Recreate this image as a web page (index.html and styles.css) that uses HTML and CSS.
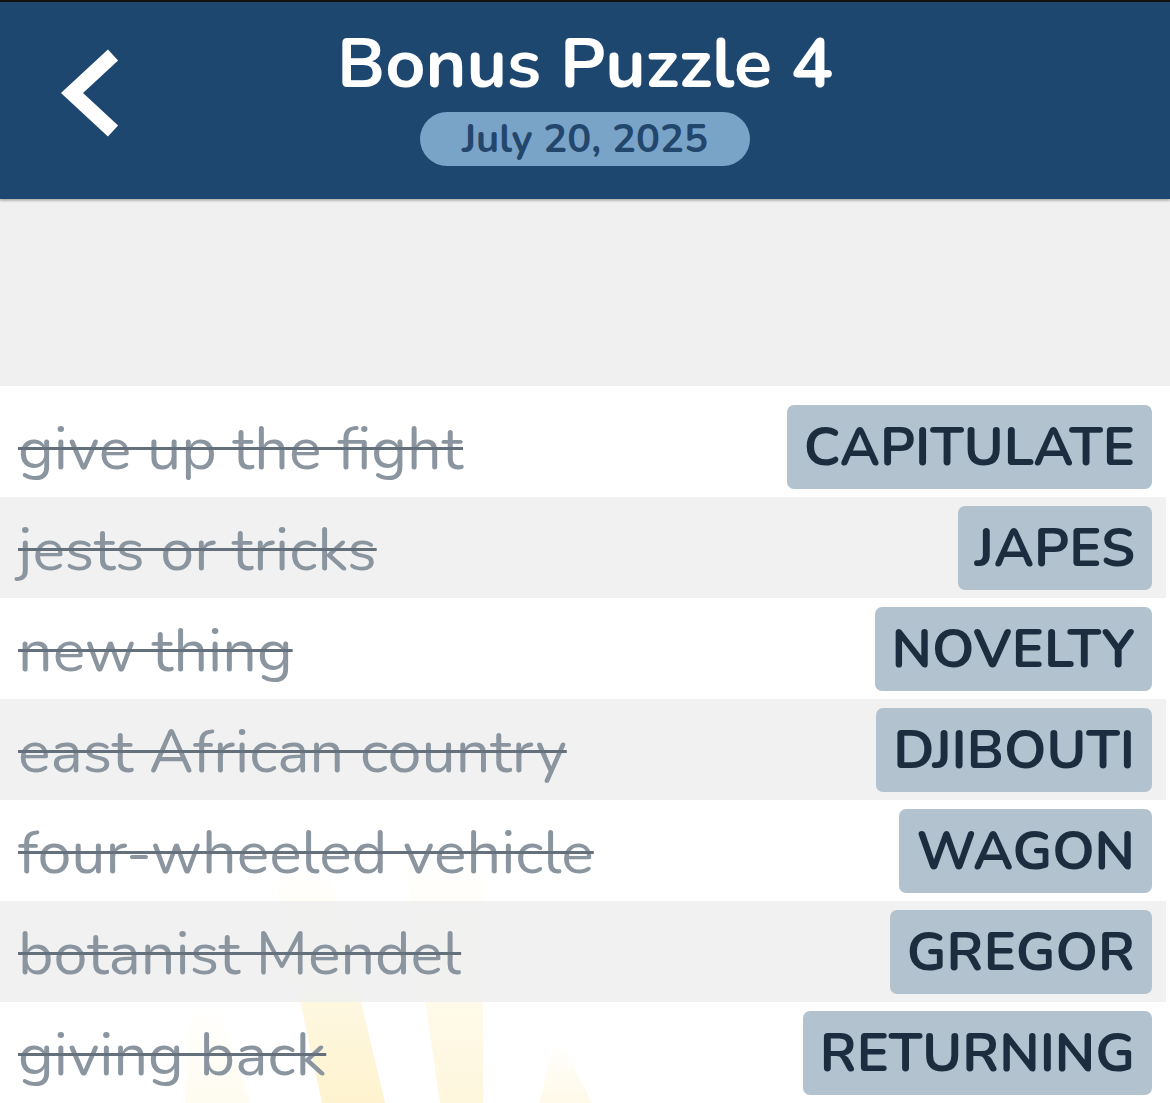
FILE: index.html
```html
<!DOCTYPE html>
<html lang="en">
<head>
<meta charset="utf-8">
<title>Bonus Puzzle 4</title>
<link rel="stylesheet" href="styles.css">
</head>
<body>
<div class="topline"></div>
<header class="header">
  <div class="back">
    <svg width="70" height="98" viewBox="0 0 70 98" aria-hidden="true">
      <polyline points="57,9 16,47 57,85" fill="none" stroke="#ffffff" stroke-width="15" stroke-linejoin="miter" stroke-linecap="butt"/>
    </svg>
  </div>
  <div class="titles">
    <h1 class="title">Bonus Puzzle 4</h1>
    <div class="date">July 20, 2025</div>
  </div>
  <div></div>
</header>
<div class="spacer"></div>
<main class="list">
  <svg class="rays" width="1170" height="717" viewBox="0 386 1170 717" aria-hidden="true">
    <defs>
      <linearGradient id="fade" x1="0" y1="0" x2="0" y2="1">
        <stop offset="0" stop-color="#fde9a6" stop-opacity="0"/>
        <stop offset="0.5" stop-color="#fde9a6" stop-opacity="0.3"/>
        <stop offset="1" stop-color="#fde9a6" stop-opacity="0.55"/>
      </linearGradient>
    </defs>
    <polygon points="272,870 330,870 385,1103 322,1103" fill="url(#fade)"/>
    <polygon points="405,860 483,860 483,1103 440,1103" fill="url(#fade)" opacity="0.7"/>
    <polygon points="553,1040 560,1040 592,1103 540,1103" fill="url(#fade)" opacity="0.45"/>
    <polygon points="190,1000 215,1000 250,1103 185,1103" fill="url(#fade)" opacity="0.3"/>
  </svg>
  <div class="row"><span class="clue">give up the fight</span><span class="chip">CAPITULATE</span></div>
  <div class="row alt"><span class="clue">jests or tricks</span><span class="chip">JAPES</span></div>
  <div class="row"><span class="clue">new thing</span><span class="chip">NOVELTY</span></div>
  <div class="row alt"><span class="clue">east African country</span><span class="chip">DJIBOUTI</span></div>
  <div class="row"><span class="clue">four-wheeled vehicle</span><span class="chip">WAGON</span></div>
  <div class="row alt"><span class="clue">botanist Mendel</span><span class="chip">GREGOR</span></div>
  <div class="row"><span class="clue">giving back</span><span class="chip">RETURNING</span></div>
</main>
</body>
</html>
```
FILE: styles.css
```css
* { box-sizing: border-box; }
html, body { margin: 0; padding: 0; }
body {
  background: #ffffff;
  font-family: "Nunito", "Lato", "Open Sans", sans-serif;
  width: 1170px;
  height: 1103px;
  overflow: hidden;
}
.topline { height: 2px; background: #111111; }
.header {
  background: #1e4770;
  height: 197px;
  padding: 27px 0 33px;
  display: grid;
  grid-template-columns: 1fr auto 1fr;
  box-shadow: 0 2px 2px rgba(0,0,0,0.25);
  position: relative;
  z-index: 2;
}
.back { align-self: start; margin-top: 17px; margin-left: 56px; }
.back svg { display: block; }
.titles { display: flex; flex-direction: column; align-items: center; gap: 13px; }
.title {
  margin: 0;
  color: #ffffff;
  font-size: 70px;
  line-height: 70px;
  font-weight: 700;
  letter-spacing: 0;
}
.date {
  height: 54px;
  line-height: 54px;
  padding: 0 42px;
  border-radius: 27px;
  background: #7aa3c8;
  color: #23466c;
  font-size: 40px;
  font-weight: 700;
}
.spacer { height: 187px; background: #f0f0f0; }
.list { position: relative; padding-top: 10px; background: #ffffff; }
.rays { position: absolute; left: 0; top: 0; z-index: 0; }
.row {
  position: relative;
  z-index: 1;
  height: 101px;
  margin-right: 4px;
  padding: 0 14px 0 18px;
  display: flex;
  align-items: center;
  justify-content: space-between;
}
.row.alt { background: rgba(240,240,240,0.9); }
.clue {
  color: #8a959f;
  font-size: 61px;
  font-weight: 400;
  text-decoration: line-through;
  text-decoration-color: #64717d;
  text-decoration-thickness: 3px;
  margin-top: 4px;
}
.chip {
  height: 84px;
  display: flex;
  align-items: center;
  padding: 0 17px;
  border-radius: 7px;
  background: #b2c3cf;
  color: #1c2d3f;
  font-size: 54px;
  font-weight: 700;
}
```
